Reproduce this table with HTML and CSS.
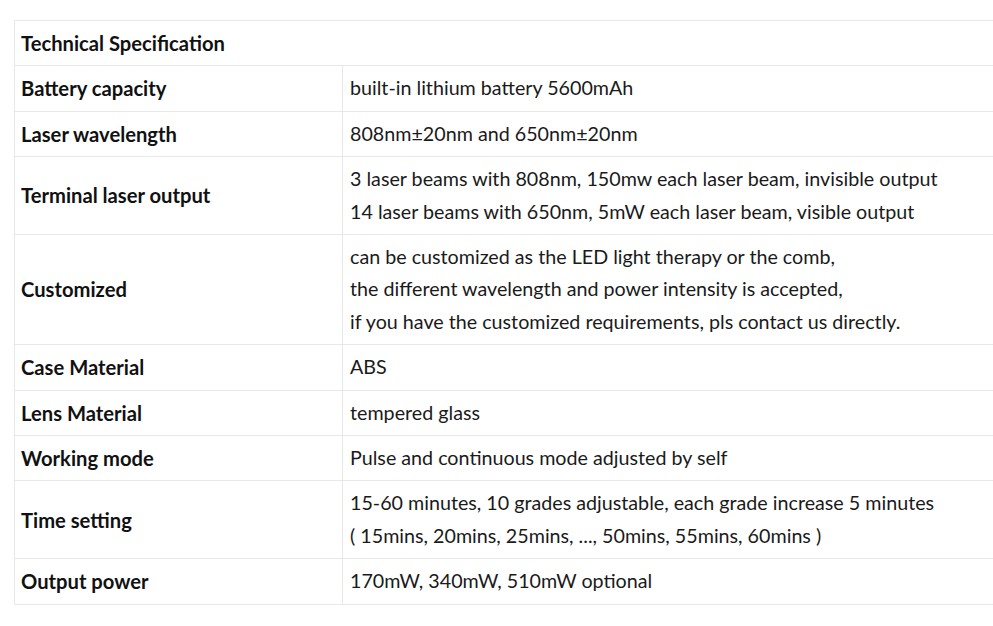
FILE: index.html
```html
<!DOCTYPE html>
<html>
<head>
<meta charset="utf-8">
<link rel="stylesheet" href="styles.css">
</head>
<body>
<table class="spec">
  <tbody>
    <tr><th colspan="2" class="head">Technical Specification</th></tr>
    <tr><th>Battery capacity</th><td>built-in lithium battery 5600mAh</td></tr>
    <tr><th>Laser wavelength</th><td>808nm±20nm and 650nm±20nm</td></tr>
    <tr><th>Terminal laser output</th><td>3 laser beams with 808nm, 150mw each laser beam, invisible output<br>14 laser beams with 650nm, 5mW each laser beam, visible output</td></tr>
    <tr><th>Customized</th><td>can be customized as the LED light therapy or the comb,<br>the different wavelength and power intensity is accepted,<br>if you have the customized requirements, pls contact us directly.</td></tr>
    <tr><th>Case Material</th><td>ABS</td></tr>
    <tr><th>Lens Material</th><td>tempered glass</td></tr>
    <tr><th>Working mode</th><td>Pulse and continuous mode adjusted by self</td></tr>
    <tr><th>Time setting</th><td>15-60 minutes, 10 grades adjustable, each grade increase 5 minutes<br>( 15mins, 20mins, 25mins, ..., 50mins, 55mins, 60mins )</td></tr>
    <tr><th>Output power</th><td>170mW, 340mW, 510mW optional</td></tr>
  </tbody>
</table>
</body>
</html>
```

FILE: styles.css
```css
html, body {
  margin: 0;
  padding: 0;
  overflow: hidden;
  background: #fff;
}
body {
  font-family: Lato, "Open Sans", sans-serif;
  font-size: 19.7px;
  color: #1a1a1a;
}
.spec {
  border-collapse: collapse;
  margin: 20px 0 0 14px;
  width: 1000px;
}
.spec th,
.spec td {
  border: 1px solid #e8e8e8;
  padding: 6px 7px 6px 6px;
  line-height: 32.4px;
  text-align: left;
  vertical-align: middle;
}
.spec td {
  padding-left: 7px;
  font-weight: 400;
}
.spec th {
  font-weight: 700;
  font-size: 20.2px;
  width: 314px;
  color: #111;
}
.spec .head {
  width: auto;
}
```
